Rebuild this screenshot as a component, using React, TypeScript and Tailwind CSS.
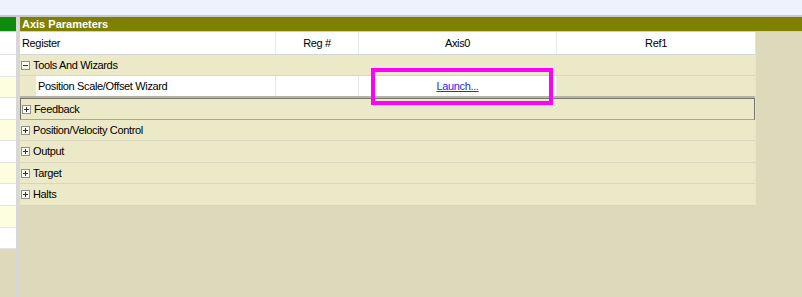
import React from "react"

const font = { fontFamily: '"Liberation Sans", Arial, sans-serif' }

function Box({ open }: { open?: boolean }) {
  return (
    <span className="relative w-[9px] h-[9px] border border-[#8f8f8f] bg-[#fbfbf6] flex-shrink-0">
      <span className="absolute left-[1px] top-[3px] w-[5px] h-[1px] bg-[#333]" />
      {!open && <span className="absolute left-[3px] top-[1px] w-[1px] h-[5px] bg-[#333]" />}
    </span>
  )
}

const groups: [string, string][] = [
  ["Feedback", "h-[22px]"],
  ["Position/Velocity Control", "h-[21px]"],
  ["Output", "h-[22px]"],
  ["Target", "h-[21px]"],
  ["Halts", "h-[22px]"],
]

const leftRows: [string, boolean][] = [
  ["h-[23px]", false],
  ["h-[22px]", false],
  ["h-[21px]", true],
  ["h-[22px]", false],
  ["h-[21px]", true],
  ["h-[22px]", false],
  ["h-[21px]", true],
  ["h-[22px]", false],
  ["h-[22px]", true],
  ["h-[21px]", false],
]

export default function App() {
  return (
    <div className="relative w-[802px] h-[297px] overflow-hidden bg-[#dcdabb] flex flex-col text-[11px] tracking-[-0.35px] text-black" style={font}>
      <div className="h-[15px] bg-[#eef2fc] flex-shrink-0" />
      <div className="h-[2px] bg-[#c9c9c9] flex-shrink-0" />

      <div className="flex flex-1">
        {/* left list */}
        <div className="w-[16px] flex flex-col">
          <div className="h-[14px] bg-[#0f8c0f]" />
          <div className="h-[1px] bg-[#cfcfcf]" />
          {leftRows.map(([h, yellow], i) => (
            <div key={i} className={`${h} border-b border-[#e2e2e2] ${yellow ? "bg-[#fdfde0]" : "bg-white"}`} />
          ))}
        </div>

        <div className="w-[4px] bg-[#d7d7d7]" />

        {/* main panel */}
        <div className="flex-1 flex flex-col">
          <div className="h-[14px] bg-[#808000] text-white font-bold tracking-normal leading-[14px] pl-[2px]">Axis Parameters</div>
          <div className="h-[1px] bg-[#cfcfcf]" />
          <div className="flex">
            <div className="w-[735px] flex flex-col">
              {/* header */}
              <div className="h-[23px] flex bg-white border-b border-[#d6d6d6]">
                <div className="w-[256px] border-r border-[#e8e8e8] pl-[2px] flex items-center">Register</div>
                <div className="w-[83px] border-r border-[#e8e8e8] flex items-center justify-center">Reg #</div>
                <div className="w-[198px] border-r border-[#e8e8e8] flex items-center justify-center">Axis0</div>
                <div className="w-[198px] flex items-center justify-center">Ref1</div>
              </div>

              {/* tools and wizards */}
              <div className="h-[21px] flex items-center gap-[3px] pl-[1px] bg-[#ebe9c7] border-b border-[#d8d6c0]">
                <Box open />
                <span>Tools And Wizards</span>
              </div>
              <div className="h-[22px] flex bg-[#ebe9c7] border-b-2 border-[#b6b4a6]">
                <div className="w-[16px]" />
                <div className="w-[240px] bg-white border-r border-[#e8e8e8] pl-[2px] flex items-center">Position Scale/Offset Wizard</div>
                <div className="w-[83px] bg-white border-r border-[#e8e8e8]" />
                <div className="w-[198px] bg-white border-r border-[#e8e8e8] flex items-center justify-center">
                  <span className="text-[#2828ee] underline">Launch...</span>
                </div>
                <div className="w-[198px]" />
              </div>

              {groups.map(([label, h], i) => (
                <div
                  key={label}
                  className={`${h} flex items-center gap-[3px] pl-[1px] bg-[#ebe9c7] ${i === 0 ? "border border-[#77766c] border-b-[#a9a79a] pl-0" : "border-b border-[#d8d6c0]"}`}
                >
                  <Box />
                  <span>{label}</span>
                </div>
              ))}
            </div>
            <div className="flex-1 border-l border-[#e6e4cc]" />
          </div>
        </div>
      </div>

      {/* highlight annotation */}
      <div className="absolute left-[371px] top-[68px] w-[182px] h-[37px] border-4 border-[#ff00ff]" />
    </div>
  )
}
